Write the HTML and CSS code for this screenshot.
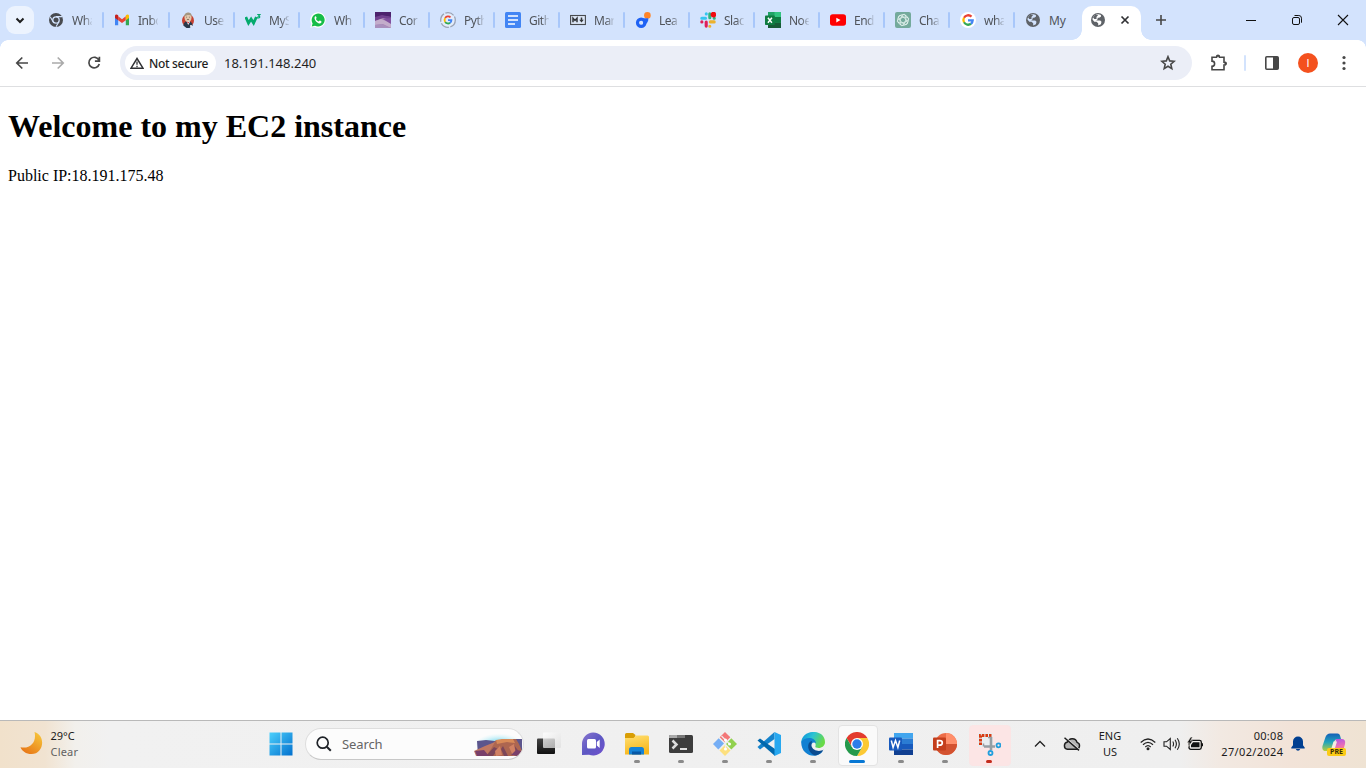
FILE: index.html
```html
<!DOCTYPE html>
<html lang="en">
<head>
<meta charset="utf-8">
<title>Browser</title>
<link rel="stylesheet" href="styles.css">
</head>
<body>
<div class="screen">
<header class="strip">
  <button class="tab-search"><svg width="28" height="28"><path d="M10.500 12.500l3.500 3.500 3.500-3.500" fill="none" stroke="#1f1f1f" stroke-width="2"/></svg></button>
  <nav class="tabs">
    <div class="tab wide"><svg class="fav" viewBox="0 0 16 16"><circle cx="8" cy="8" r="7" fill="#484b50"/><circle cx="8" cy="8" r="3.200" fill="#484b50" stroke="#d3e3fd" stroke-width="1.300"/><path d="M8 4.600h6M5.100 9.800L2.200 4.800M10.900 9.800L8 14.800" stroke="#d3e3fd" stroke-width="1.100"/></svg><span>Wha</span></div>
    <div class="tab wide"><svg class="fav" viewBox="0 0 16 16"><path d="M1 4v9.200h3.200V6.500z" fill="#4285f4"/><path d="M15 4v9.200h-3.200V6.500z" fill="#34a853"/><path d="M4.200 4.300L8 7.200l3.800-2.900v4L8 11.100 4.200 8.300z" fill="#ea4335"/><path d="M1 4c0-1.700 1.700-2 3.200-.8v5.100L1 5.900z" fill="#c5221f"/><path d="M15 4c0-1.700-1.700-2-3.200-.8v5.100L15 5.900z" fill="#fbbc04"/></svg><span>Inbo</span></div>
    <div class="tab"><svg class="fav" viewBox="0 0 16 16"><ellipse cx="8" cy="8.500" rx="6" ry="6.500" fill="#c74232"/><path d="M3.300 13.500c.5-3 2-4.500 4.700-4.500s4.200 1.500 4.700 4.500L9.500 16h-3z" fill="#29394b"/><ellipse cx="8" cy="5.300" rx="3.500" ry="4.500" fill="#e0c6ab"/><path d="M4.200 5C3.500-.5 12.500-1 11.600 4.400 10.500 2.700 7 2 4.200 5z" fill="#a49681"/><path d="M6.500 9.300L8.200 13l2-3.600z" fill="#fff"/><path d="M7.200 10.100l1.800.8" stroke="#c22"/><path d="M6.200 5.200h.8M9 5.200h.8M7 7.500h2" stroke="#654" stroke-width=".7"/><circle cx="11" cy="14" r="1" fill="#fff"/></svg><span>Use</span></div>
    <div class="tab"><svg class="fav" viewBox="0 0 16 16"><path d="M.8 5l2.700 6 2.600-4 2.500 4L11.400 5" fill="none" stroke="#04aa6d" stroke-width="2.800"/><path d="M12.200 2.500h2.700l-1.400 1.600c2 .1 1.600 2.500-1.400 1.500" fill="none" stroke="#04aa6d" stroke-width="1.200"/></svg><span>MyS</span></div>
    <div class="tab"><svg class="fav" viewBox="0 0 16 16"><path d="M.2 15.800L1.400 12A7.700 7.700 0 1 1 4.200 14.700z" fill="#fff"/><path d="M1.700 14.400l.9-3A6.500 6.500 0 1 1 5 13.700z" fill="#16bd48"/><path d="M5.100 4.300c1-.7 1.400 1 1.500 1.600L5.900 7c.6 1.300 1.400 2 2.800 2.600l1-1c.9.200 2.300.8 1.700 1.800-2.500 3.400-8.800-2.900-6.300-6.100z" fill="#fff"/></svg><span>Wh</span></div>
    <div class="tab"><svg class="fav" viewBox="0 0 16 16"><path d="M0 0h16v16H0z" fill="#a887b5"/><path d="M0 0h16v5L7 4 0 7z" fill="#4c226d"/><path d="M0 5l7-2 9 2v3L8 6 0 9z" fill="#70418f"/><path d="M0 9l6-2 10 4v5L8 12l-8 1z" fill="#c3adcb"/><path d="M8 7l8-1v6z" fill="#8151a0"/><path d="M0 13l6-1 10 4H0z" fill="#a990bd"/></svg><span>Cor</span></div>
    <div class="tab"><svg class="fav" viewBox="0 0 16 16"><circle cx="8" cy="8" r="7.300" fill="#e3ecfb" stroke="#9ba4b5" stroke-width="1.300" stroke-dasharray="9 1.500"/><g fill="none" stroke-width="1.800"><path d="M5.200 6A3.400 3.400 0 0 1 10.500 5.400" stroke="#ea4335"/><path d="M5.200 6a3.600 3.600 0 0 0 0 4" stroke="#fbbc04"/><path d="M5.200 10a3.400 3.400 0 0 0 4.900.8" stroke="#34a853"/><path d="M10.100 10.800A3.300 3.300 0 0 0 11.400 8.200H8" stroke="#4285f4"/></g></svg><span>Pyth</span></div>
    <div class="tab"><svg class="fav" viewBox="0 0 16 16"><rect width="16" height="16" rx="1.500" fill="#4285f4"/><path d="M3 4h10M3 8h10M3 12h7" stroke="#fff" stroke-width="1.700"/></svg><span>Gith</span></div>
    <div class="tab"><svg class="fav" viewBox="0 0 16 16"><rect x=".6" y="3.500" width="14.800" height="9" fill="#dde7f7" stroke="#474a4e" stroke-width="1.100"/><path d="M3 10.300V6.300l2 2.200 2-2.200v4M11.500 5.500v3" fill="none" stroke="#33363a" stroke-width="1.500"/><path d="M9.200 7.800h4.600l-2.300 2.800z" fill="#33363a"/></svg><span>Mar</span></div>
    <div class="tab"><svg class="fav" viewBox="0 0 16 16"><circle cx="12.400" cy="3.400" r="3.300" fill="#ff8427"/><circle cx="6.200" cy="10.700" r="3.600" fill="none" stroke="#1f62f4" stroke-width="3.400"/><path d="M4 6.500l9.300-.2q.3 4-3 6z" fill="#1f62f4"/><circle cx="6.200" cy="10.700" r="1.900" fill="#d3e3fd"/></svg><span>Lea</span></div>
    <div class="tab"><svg class="fav" viewBox="0 0 16 16"><g stroke-width="3.100" stroke-linecap="round"><path d="M1.800 6.200h3.700M6.300 1.800v.1" stroke="#36c5f0"/><path d="M9.800 1.800v4M14.200 6.300h.1" stroke="#2eb67d"/><path d="M10.300 9.900h3.900M9.800 14.200v.1" stroke="#ecb22e"/><path d="M6.200 10.100v4M1.800 9.900h.1" stroke="#e01e5a"/></g><circle cx="13.400" cy="2.600" r="2.800" fill="#f00b11"/></svg><span>Slac</span></div>
    <div class="tab"><svg class="fav" viewBox="0 0 16 16"><path d="M3 0h13v16H3z" fill="#21a366"/><path d="M9.500 0H16v5H9.500z" fill="#33c481"/><path d="M3 10.500h13V16H3z" fill="#185c37"/><path d="M9.500 5H16v5.500H9.500z" fill="#107c41"/><rect y="3.500" width="9.800" height="9.500" rx=".8" fill="#107c41"/><path d="M2.900 5.700l4 5M6.900 5.700l-4 5" stroke="#fff" stroke-width="1.500"/></svg><span>Noe</span></div>
    <div class="tab"><svg class="fav" viewBox="0 0 16 16"><rect y="2.300" width="16" height="11.500" rx="2.800" fill="#f00"/><path d="M6.300 5.700v4.700L10.500 8z" fill="#fff"/></svg><span>End</span></div>
    <div class="tab"><svg class="fav" viewBox="0 0 16 16"><rect width="16" height="16" rx="2" fill="#74aa9c"/><g fill="none" stroke="#e6f4f0" stroke-width=".8"><ellipse cx="8" cy="8" rx="2.600" ry="5.800" transform="rotate(15 8 8)"/><ellipse cx="8" cy="8" rx="2.600" ry="5.800" transform="rotate(75 8 8)"/><ellipse cx="8" cy="8" rx="2.600" ry="5.800" transform="rotate(135 8 8)"/><circle cx="8" cy="8" r="5.400"/></g></svg><span>Cha</span></div>
    <div class="tab"><svg class="fav" viewBox="0 0 16 16"><circle cx="8" cy="8" r="8" fill="#fff"/><g fill="none" stroke-width="2.300"><path d="M4 5.700A4.800 4.800 0 0 1 11.500 4.600" stroke="#ea4335"/><path d="M4 5.700a4.800 4.800 0 0 0 0 4.600" stroke="#fbbc04"/><path d="M4 10.300a4.800 4.800 0 0 0 7 1.500" stroke="#34a853"/><path d="M11 11.800A4.800 4.800 0 0 0 12.700 8.300H8" stroke="#4285f4"/></g></svg><span>wha</span></div>
    <div class="tab last"><svg class="fav" viewBox="0 0 16 16"><circle cx="8" cy="8" r="7" fill="#5f6368"/><path d="M8.500 2.300l2.400.8v1.600l-1.800 1H7.600v1.600L6.200 8.500h4l1.300 1.300-.6 2.500L8.200 13.500v-2.300L6.500 9.700H4.300L2.500 7.400C2.700 4.500 5.500 2 8.500 2.300z" fill="#d3e3fd"/><path d="M3 5.200l2.300-2.400h3L6.500 5v2H4.300z" fill="#5f6368"/></svg><span>My</span></div>
    <div class="tab active"><svg class="fav" viewBox="0 0 16 16"><circle cx="8" cy="8" r="7" fill="#5f6368"/><path d="M8.500 2.300l2.400.8v1.600l-1.800 1H7.600v1.600L6.200 8.500h4l1.300 1.300-.6 2.500L8.200 13.500v-2.300L6.500 9.700H4.300L2.500 7.400C2.700 4.500 5.500 2 8.500 2.300z" fill="#fff"/><path d="M3 5.200l2.300-2.400h3L6.500 5v2H4.300z" fill="#5f6368"/></svg><svg class="close" width="10" height="10"><path d="M1.500 1.500l7 7M8.500 1.500l-7 7" stroke="#303134" stroke-width="1.700"/></svg></div>
  </nav>
  <svg class="plus" width="12" height="12"><path d="M6 1v10M1 6h10" stroke="#474747" stroke-width="1.600"/></svg>
  <div class="window-buttons">
    <svg viewBox="0 0 46 40"><path d="M18 20.500h10" stroke="#111"/></svg>
    <svg viewBox="0 0 46 40"><rect x="18.500" y="17.500" width="7" height="7" rx="1.500" fill="none" stroke="#111"/><path d="M20.500 15.500h4.300q2.700 0 2.700 2.700v4.500" fill="none" stroke="#111"/></svg>
    <svg viewBox="0 0 46 40"><path d="M18 15l10 10M28 15L18 25" stroke="#111" stroke-width="1.100"/></svg>
  </div>
</header>
<div class="toolbar">
  <div class="navs">
    <svg viewBox="0 0 36 36"><path d="M24 18H13M18.300 12.500L12.800 18l5.500 5.500" fill="none" stroke="#474747" stroke-width="1.700"/></svg>
    <svg viewBox="0 0 36 36"><path d="M12 18h11M17.700 12.500l5.500 5.500-5.500 5.500" fill="none" stroke="#aaa" stroke-width="1.700"/></svg>
    <svg viewBox="0 0 36 36"><path d="M23 15.300A5.300 5.300 0 1 0 23.300 19M23.400 11.700v4.500h-4.500" fill="none" stroke="#474747" stroke-width="1.700"/></svg>
  </div>
  <div class="omnibox">
    <div class="chip"><svg width="14" height="12"><path d="M7 1.500L13 11.200H1z" fill="none" stroke="#303134" stroke-width="1.500"/><path d="M7 4.500v3.300M7 8.800v1.400" stroke="#303134" stroke-width="1.300"/></svg><span>Not secure</span></div>
    <span class="url">18.191.148.240</span>
    <svg class="star" width="16" height="16"><path d="M8 1.700l1.700 4.200 4.500.4-3.400 2.900 1 4.400L8 11.300l-3.800 2.300 1-4.400-3.400-2.900 4.500-.4z" fill="none" stroke="#474747" stroke-width="1.600"/></svg>
  </div>
  <svg class="puzzle" width="18" height="18"><path d="M2 3.300h4.500a1.500 1.500 0 0 1 3 0H14v5a1.400 1.400 0 0 1 0 2.800v4.600H2v-3.400a2.600 2.600 0 0 0 0-5.200z" fill="none" stroke="#474747" stroke-width="1.600"/><path d="M6 2.500a2 2 0 0 1 4 0zM15 7.500a2 2 0 0 1 0 4z" fill="#474747"/></svg>
  <i class="divider"></i>
  <svg class="panel" width="16" height="16"><rect x="1.800" y="1.800" width="12.400" height="12.400" rx="1" fill="none" stroke="#474747" stroke-width="1.600"/><path d="M9 2h5v12H9z" fill="#474747"/></svg>
  <b class="avatar">I</b>
  <svg class="dots" width="4" height="16" fill="#474747"><circle cx="2" cy="2.500" r="1.600"/><circle cx="2" cy="8" r="1.600"/><circle cx="2" cy="13.500" r="1.600"/></svg>
</div>
<main class="page"><h1>Welcome to my EC2 instance</h1><p>Public IP:18.191.175.48</p></main>
<footer class="taskbar">
  <div class="weather">
    <svg width="24" height="24"><defs><linearGradient id="moon" x1="1" y1="0" x2=".3" y2="1"><stop stop-color="#f8cc3d"/><stop offset="1" stop-color="#e87817"/></linearGradient></defs><path d="M14.500 1c12 4 9 22-3 22C6 23 2 20 .500 16.200 10 18.500 17 11 14.500 1z" fill="url(#moon)"/></svg>
    <div class="weather-text"><span>29°C</span><span class="muted">Clear</span></div>
  </div>
  <div class="apps">
    <div class="app start"><svg viewBox="0 0 24 24"><defs><linearGradient id="win" x1="0" y1="0" x2="1" y2="1"><stop stop-color="#4cd0fc"/><stop offset="1" stop-color="#0270ce"/></linearGradient></defs><path d="M.5.500h11v11H.5zM12.500.500h11v11h-11zM.5 12.500h11v11H.5zM12.500 12.500h11v11h-11z" fill="url(#win)"/></svg></div>
    <div class="search">
      <svg width="16" height="16"><circle cx="6.700" cy="6.700" r="5.500" fill="none" stroke="#1f2328" stroke-width="1.700"/><path d="M10.800 10.800l4 4" stroke="#1f2328" stroke-width="2"/></svg>
      <span>Search</span>
      <svg class="mesa" width="50" height="26"><defs><radialGradient id="sky" cx=".5" cy=".65" r=".55"><stop stop-color="#77dcf2"/><stop offset=".55" stop-color="#ace8f5"/><stop offset="1" stop-color="#d9f5fa" stop-opacity="0"/></radialGradient></defs><ellipse cx="26" cy="12" rx="23" ry="12" fill="url(#sky)"/><path d="M4 10l9-1 9 1 15-2h12v11l-8 6H5z" fill="#5c568d"/><path d="M23 9h5l2-1h13l3 5 3 7-5 5H9z" fill="#ad6650"/><path d="M23 9l6-1h11l2 4-8-1-10 2z" fill="#d98b58"/><path d="M1 20l11-5 10-4-4 7-5 7H3z" fill="#c17862"/><path d="M13 25l8-9 4 2-5 7zM30 15l5 10h-4l-3-7zM41 14l6 8-3 2z" fill="#7c4659"/><path d="M22 20l5-5 2 9-6 1zM36 16l5-3 2 11-3 1z" fill="#d18163"/><path d="M2 20l9-1 5 6H4zM43 19l6 1-4 5-7-1z" fill="#79406b"/></svg>
    </div>
    <div class="app task-view"><svg viewBox="0 0 24 24"><defs><linearGradient id="task" x2="0" y2="1"><stop stop-color="#444"/><stop offset="1" stop-color="#111"/></linearGradient><linearGradient id="glass" x2="1" y2="1"><stop stop-color="#fff" stop-opacity=".8"/><stop offset="1" stop-color="#ddd" stop-opacity=".7"/></linearGradient></defs><rect y="6.500" width="18" height="15.500" rx="1" fill="url(#task)"/><rect x="6" y=".5" width="18" height="15.500" rx="1" fill="url(#glass)"/></svg><i></i></div>
    <div class="app"><svg viewBox="0 0 24 24"><defs><linearGradient id="chat" x2="1" y2="1"><stop stop-color="#8a76cf"/><stop offset=".5" stop-color="#5d58c3"/><stop offset="1" stop-color="#7050ce"/></linearGradient></defs><path d="M12 .5a11.500 11.500 0 1 1-4 22.200L1 23V12A11.500 11.500 0 0 1 12 .5z" fill="url(#chat)"/><rect x="6" y="7" width="9" height="9.500" rx="1.500" fill="#fff"/><path d="M15.800 10l2.900-2.500v8.500l-2.900-2.500z" fill="#fff"/></svg><i></i></div>
    <div class="app running"><svg viewBox="0 0 24 24"><defs><linearGradient id="folder" x2=".3" y2="1"><stop stop-color="#ffe073"/><stop offset="1" stop-color="#f8b71c"/></linearGradient></defs><path d="M0 2.500Q0 1 1.500 1H8l2.500 2L9.500 7H0z" fill="#d99e05"/><path d="M0 6h8.500l2.500-2.500h11.500q1.500 0 1.500 1.500v17.500H0z" fill="url(#folder)"/><path d="M4 22.500v-5q0-2.500 2.500-2.500h10q2.500 0 2.500 2.500v5z" fill="#1583d7"/><path d="M7 19.500h9v3H7z" fill="#0757a5"/></svg><i></i></div>
    <div class="app running"><svg viewBox="0 0 24 24"><rect y="3" width="24" height="18" rx="1.500" fill="#3d3d3d"/><path d="M0 6V4.500Q0 3 1.500 3H8v3z" fill="#aaa"/><path d="M8 3h8v3H8z" fill="#777"/><path d="M3.500 8.500l4 4-4 4" fill="none" stroke="#ddd" stroke-width="2.500"/><path d="M11 17h7" stroke="#fff" stroke-width="1.700"/></svg><i></i></div>
    <div class="app running"><svg viewBox="0 0 24 24"><path d="M12 0l5.300 5.300L12 10.600 6.700 5.300z" fill="#f37778"/><path d="M5.700 6.300L11 11.600 5.300 17.400 0 12z" fill="#75aef5"/><path d="M18.300 6.300L24 12l-5.700 5.500L13 12z" fill="#91d14f"/><path d="M12 13l5.500 5.500L12 24l-5.500-5.500z" fill="#fde07e"/><path d="M8.500 4l4 4v10M12.500 8l4 4" fill="none" stroke="#efefef" stroke-width="1.200"/><circle cx="12.500" cy="8" r="1.500" fill="#fff"/><circle cx="16.500" cy="12" r="1.500" fill="#fff"/><circle cx="12.500" cy="17" r="1.500" fill="#fff"/></svg><i></i></div>
    <div class="app running"><svg viewBox="0 0 24 24"><path d="M.5 15L17.500 0v7L3 17.500z" fill="#1583cc"/><path d="M.5 8.500L3 6.500 18 17v7z" fill="#0068ad"/><path d="M17.500 0L24 3v18l-6.500 3z" fill="#27a8f0"/></svg><i></i></div>
    <div class="app running"><svg viewBox="0 0 24 24"><defs><linearGradient id="edge" x2="1" y2=".4"><stop stop-color="#078cdd"/><stop offset=".5" stop-color="#2bc3d4"/><stop offset="1" stop-color="#68da48"/></linearGradient></defs><path d="M.2 10.500C1-3.500 24-3.500 24 10c0 5-5 7-9 5.500-1.500-.7 0-1.500-.4-3C13.500 6 5 6 .2 10.500z" fill="url(#edge)"/><path d="M.2 10C3 5 14 4 15 11c-4-2-6 2-4.500 6 1.500 4 7 5 11.500 2-6 9-22 5-21.800-9z" fill="#1180d2"/><path d="M11 9C5 10 6 21 14 23.500c4-.5 7-3 8.500-6-4 3-11 1-12-3.500-.3-2 .2-3 .5-5z" fill="#0b4c90"/></svg><i></i></div>
    <div class="app running current"><svg viewBox="0 0 24 24"><path d="M1.600 6A12 12 0 0 1 22.400 6H12L6.800 15z" fill="#e33b2e"/><path d="M22.400 6A12 12 0 0 1 12 24l5.200-9L12 6z" fill="#fcc934"/><path d="M1.600 6A12 12 0 0 0 12 24l5.200-9H6.800z" fill="#24994b"/><circle cx="12" cy="12" r="6" fill="#fff"/><circle cx="12" cy="12" r="4.700" fill="#2d7de9"/></svg><i></i></div>
    <div class="app running"><svg viewBox="0 0 24 24"><path d="M5 1h19v5.500H5z" fill="#41a5ee"/><path d="M5 6.500h19V12H5z" fill="#2b7cd3"/><path d="M5 12h19v5.500H5z" fill="#185abd"/><path d="M5 17.500h19V23H5z" fill="#103f91"/><rect y="5.500" width="13" height="13" rx="1" fill="#185abd"/><path d="M2.300 8.500l1.800 7 2.400-7 2.400 7 1.800-7" fill="none" stroke="#fff" stroke-width="1.500"/></svg><i></i></div>
    <div class="app running"><svg viewBox="0 0 24 24"><circle cx="13" cy="12" r="11" fill="#ed6c47"/><path d="M13 1a11 11 0 0 1 11 11H13z" fill="#ff8f6b"/><path d="M2 12h22a11 11 0 0 1-22 0z" fill="#d35230"/><rect y="5.500" width="13" height="13" rx="1" fill="#c43e1c"/><path d="M4.600 16V8.700h2.200q2.500 0 2.500 2.200T6.500 13.200H4.600" fill="none" stroke="#fff" stroke-width="1.700"/></svg><i></i></div>
    <div class="app running alert"><svg viewBox="0 0 24 24"><path d="M1 1h15v14H1z" fill="#e8edf0"/><path d="M3.500 13V3.500H14.500" fill="none" stroke="#d83b12" stroke-width="3" stroke-dasharray="2.600 1"/><path d="M7 14.500h11M14 5v13" fill="none" stroke="#969ea4" stroke-width="2.600"/><path d="M14 5.500H11M6.500 14.500v-3" stroke="#969ea4" stroke-width="1.500" fill="none"/><circle cx="13.500" cy="21" r="2" fill="none" stroke="#239fdd" stroke-width="1.800"/><circle cx="21.500" cy="13.300" r="2" fill="none" stroke="#239fdd" stroke-width="1.800"/></svg><i></i></div>
  </div>
  <div class="tray">
    <svg class="caret" width="12" height="8"><path d="M1 6.500l5-5 5 5" fill="none" stroke="#222" stroke-width="1.300"/></svg>
    <svg class="cloud" width="18" height="14"><path d="M4.500 12.300a3.700 3.700 0 0 1 0-7.300A5 5 0 0 1 14 5.300a3.600 3.600 0 0 1-.5 7z" fill="#b5b5b5" stroke="#1d1d1d" stroke-width="1.400"/><path d="M2.200.300L16.700 12.900" stroke="#f0f0f0" stroke-width="1.300"/><path d="M1.500.8L16 13.400" stroke="#1d1d1d" stroke-width="1.500"/></svg>
    <div class="language"><span>ENG</span><span>US</span></div>
    <svg class="wifi" width="16" height="14"><g fill="none" stroke="#222" stroke-width="1.200"><path d="M.7 5.500q7.300-7 14.600 0M3 7.700q5-4.800 10 0M5.300 10q2.700-2.600 5.400 0"/></g><circle cx="8" cy="11.700" r="1.500" fill="#222"/></svg>
    <svg class="volume" width="18" height="14"><path d="M1 4.800h2.500L7.300 1.500v11L3.500 9.200H1z" fill="none" stroke="#222" stroke-width="1.100"/><path d="M9.800 4.500q1.500 2.500 0 5M12 2.700q2.800 4.300 0 8.600M14.300 1.200q4 5.800 0 11.600" fill="none" stroke="#222" stroke-width="1.100"/></svg>
    <svg class="battery" width="17" height="14"><rect x="2" y="3.300" width="12.300" height="9" rx="1.800" fill="none" stroke="#111" stroke-width="1.300"/><path d="M6 5.300h6.500v5H4V8z" fill="#111"/><path d="M14.500 6.300H16v3h-1.500z" fill="#111"/><path d="M3.700 0L0 5.800h2.300l-1 3.700 4.500-5.500H3.500L5.500 0z" fill="#111" stroke="#f2ece7" stroke-width=".6"/></svg>
    <div class="clock"><span>00:08</span><span>27/02/2024</span></div>
    <svg class="bell" width="14" height="16"><path d="M7 .5a5 5 0 0 1 5 5v3.800l1.700 2.200v.9H.3v-.9L2 9.300V5.500a5 5 0 0 1 5-5zM4.800 13h4.400a2.300 2.300 0 0 1-4.400 0z" fill="#003f91"/></svg>
    <div class="copilot"><svg width="24" height="22"><defs><linearGradient id="coA" x2="0" y2="1"><stop stop-color="#1460b8"/><stop offset=".5" stop-color="#21a5bc"/><stop offset="1" stop-color="#b7ce3c"/></linearGradient><linearGradient id="coB" x2=".2" y2="1"><stop stop-color="#a852ed"/><stop offset=".6" stop-color="#ee70b2"/><stop offset="1" stop-color="#f99650"/></linearGradient></defs><path d="M8 .5h7.500q2 0 2.500 2L19 6h-3q-3 0-4 3l-2 7q-.5 2-2.500 2H4q-4.500 0-3.500-5L3.500 4Q4.800.5 8 .5z" fill="url(#coA)"/><path d="M14 6h5.500Q24 6 23 11l-2 7q-1.500 3-4 3H8q2 0 3-3l2-6q1-3 1-6z" fill="url(#coB)"/><path d="M11.500 8.500h3.500l-2 6.500H9.500z" fill="#f5ebe2"/></svg><b>PRE</b></div>
  </div>
</footer>
</div>
</body>
</html>
```
FILE: styles.css
```css
* { box-sizing: border-box; }
body { margin: 0; }
svg { display: block; flex: none; }
.screen {
  width: 1366px;
  height: 768px;
  display: flex;
  flex-direction: column;
  overflow: hidden;
  background: #fff;
  font-family: "Noto Sans", sans-serif;
}
.strip { height: 40px; display: flex; align-items: center; background: #d3e3fd; flex: none; }
.tab-search { width: 28px; height: 28px; margin-left: 6px; padding: 0; border: 0; border-radius: 9px; background: #ecf3fe; flex: none; }
.tabs { display: flex; height: 40px; margin-left: 4px; flex: none; }
.tab { position: relative; display: flex; align-items: center; width: 65px; height: 40px; padding-left: 10px; gap: 8px; font-size: 12px; color: #50545a; }
.tab.wide { width: 66px; }
.tab::after { content: ""; position: absolute; right: 0; top: 12px; width: 2px; height: 16px; border-radius: 1px; background: #a8c7fa; }
.tab.last::after { display: none; }
.tab span { width: 20px; white-space: nowrap; line-height: 18px; letter-spacing: -.5px; padding-top: 1px; -webkit-mask-image: linear-gradient(90deg, #000 60%, transparent 105%); mask-image: linear-gradient(90deg, #000 60%, transparent 105%); }
.tab.last span { letter-spacing: -.1px; -webkit-mask-image: none; mask-image: none; }
.fav { width: 16px; height: 16px; }
.tab.active { width: 59px; height: 34px; margin: 6px 0 0 2px; padding: 0 0 6px 8px; gap: 14px; background: #fff; border-radius: 10px 10px 0 0; }
.tab.active::before, .tab.active::after { content: ""; position: absolute; top: auto; bottom: 0; width: 10px; height: 10px; border-radius: 0; }
.tab.active::before { left: -10px; background: radial-gradient(circle at 0 0, transparent 9.5px, #fff 10px); }
.tab.active::after { right: -10px; background: radial-gradient(circle at 100% 0, transparent 9.5px, #fff 10px); }
.plus { margin-left: 14px; }
.window-buttons { display: flex; margin-left: auto; }
.window-buttons svg { width: 46px; height: 40px; }

.toolbar { height: 47px; display: flex; align-items: center; flex: none; border-bottom: 1px solid #dedfe1; background: radial-gradient(circle at 8px 8px, #fff 7.5px, #d3e3fd 8px) 0 0 / 8px 8px no-repeat, radial-gradient(circle at 0 8px, #fff 7.5px, #d3e3fd 8px) 100% 0 / 8px 8px no-repeat, #fff; }
.navs { display: flex; margin-left: 4px; }
.navs svg { width: 36px; height: 36px; }
.omnibox { display: flex; align-items: center; width: 1072px; height: 34px; margin-left: 8px; padding: 0 16px 0 5px; border-radius: 17px; background: #ebeef7; font-size: 12px; color: #1f1f1f; }
.chip { display: flex; align-items: center; gap: 5px; width: 91px; height: 24px; padding-left: 5px; border-radius: 12px; background: #fff; font-weight: 500; white-space: nowrap; letter-spacing: -.32px; }
.url { margin-left: 8px; font-size: 13px; line-height: 18px; }
.star { margin-left: auto; }
.puzzle { margin-left: 18px; }
.divider { width: 2px; height: 16px; margin: 0 18px 0 16px; border-radius: 1px; background: #d3e3fd; }
.avatar { display: flex; align-items: center; justify-content: center; width: 20px; height: 20px; margin-left: 18px; border-radius: 50%; background: #f4511e; color: #fff; font: 11px Roboto, sans-serif; }
.dots { margin-left: 24px; }

.page { flex: 1; padding: 0 8px; font-family: "Liberation Serif", serif; font-size: 16px; color: #000; overflow: hidden; }
.page h1 { margin: 21px 0 22.5px; font-size: 32px; line-height: 36px; }
.page p { margin: 0; line-height: 18px; }

.taskbar { display: flex; height: 48px; flex: none; border-top: 1px solid #b9b9b9; background: linear-gradient(90deg, #f1e1cb 0, #f1e3d1 45px, #f2f0ec 75px, #f1f1f1 110px, #efefef 1180px, #f2e9e2 1220px, #f2e3d8 1290px, #efe3d3 1366px); font-size: 11px; color: #1b1b1b; }
.weather { display: flex; width: 259px; padding: 10px 0 0 20px; gap: 7px; }
.weather-text, .language, .clock { display: flex; flex-direction: column; line-height: 16px; }
.weather-text { margin-top: -3px; margin-left: -.5px; }
.muted { color: #616161; letter-spacing: .2px; }
.apps { display: flex; align-items: center; height: 46px; flex: none; }
.app { width: 44px; height: 46px; display: flex; flex-direction: column; align-items: center; position: relative; padding-top: 11px; }
.app > svg { width: 24px; height: 24px; }
.app i { width: 6px; height: 3px; margin-top: 4px; border-radius: 2px; }
.running i { background: #8a8a8a; }
.current, .alert { isolation: isolate; }
.current::before, .alert::before { content: ""; position: absolute; z-index: -1; left: 3px; top: 4px; width: 38px; height: 39px; border: 1px solid #e3e3e3; border-radius: 4px; background: #fafafa; }
.alert::before { left: 2px; width: 40px; border-color: #fbe5e5; background: #fce5e5; }
.current i { width: 16px; background: #0878d4; }
.alert i { background: #c42b1c; }
.start { width: 43px; }
.search { display: flex; align-items: center; width: 219px; height: 32px; margin: 0 3px; padding-left: 10px; gap: 10px; border: 1px solid #dedede; border-bottom-color: #c8c8c8; border-radius: 16px; background: #fcfcfc; font-size: 13px; color: #656565; overflow: hidden; }
.search span { line-height: 18px; letter-spacing: -.1px; }
.mesa { margin-left: auto; }
.tray { display: flex; align-items: center; height: 46px; margin-left: auto; }
.cloud { margin-left: 17px; }
.language { width: 34px; margin-left: 12px; text-align: center; }
.wifi { margin-left: 13px; }
.volume { margin-left: 7px; }
.battery { margin-left: 6px; }
.clock { width: 76px; margin-left: 3px; text-align: right; white-space: nowrap; }
.clock span:last-child { letter-spacing: .35px; margin-right: -.35px; }
.clock span:first-child { letter-spacing: .3px; margin-right: -.3px; }
.bell { margin-left: 8px; }
.copilot { position: relative; margin: 0 20px 0 17px; }
.copilot b { position: absolute; left: 5px; top: 15px; width: 19px; height: 8px; border-radius: 2px; background: #fccb16; color: #3a2b05; font-size: 7px; line-height: 8px; text-align: center; }
```
